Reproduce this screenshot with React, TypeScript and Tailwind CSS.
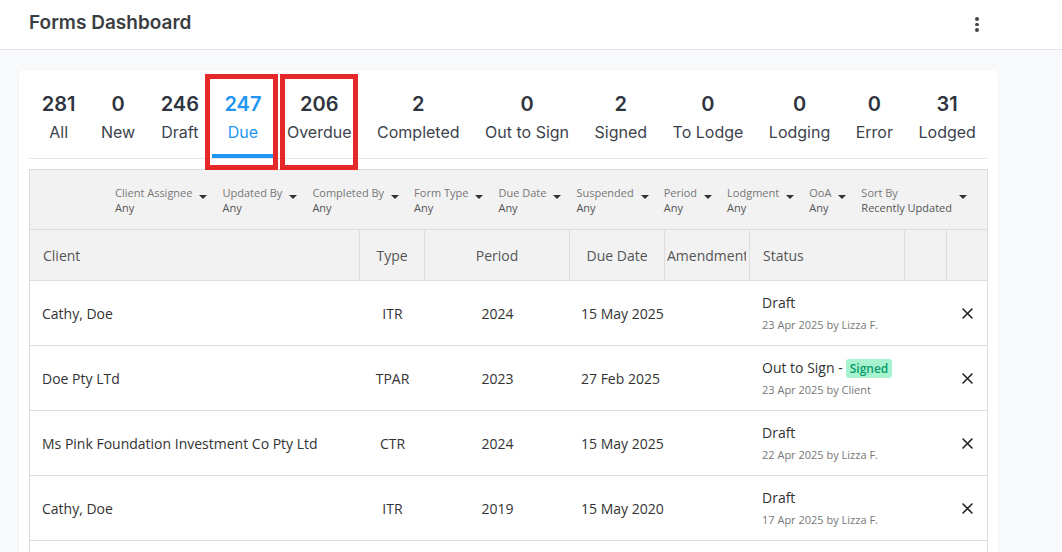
import React from "react";

type Tab = { count: number; label: string };

const tabs: Tab[] = [
  { count: 281, label: "All" },
  { count: 0, label: "New" },
  { count: 246, label: "Draft" },
  { count: 247, label: "Due" },
  { count: 206, label: "Overdue" },
  { count: 2, label: "Completed" },
  { count: 0, label: "Out to Sign" },
  { count: 2, label: "Signed" },
  { count: 0, label: "To Lodge" },
  { count: 0, label: "Lodging" },
  { count: 0, label: "Error" },
  { count: 31, label: "Lodged" },
];

const filters = [
  { label: "Client Assignee", value: "Any" },
  { label: "Updated By", value: "Any" },
  { label: "Completed By", value: "Any" },
  { label: "Form Type", value: "Any" },
  { label: "Due Date", value: "Any" },
  { label: "Suspended", value: "Any" },
  { label: "Period", value: "Any" },
  { label: "Lodgment", value: "Any" },
  { label: "OoA", value: "Any" },
  { label: "Sort By", value: "Recently Updated" },
];

type Row = {
  client: string;
  type: string;
  period: string;
  due: string;
  status: string;
  signed?: boolean;
  updated: string;
};

const rows: Row[] = [
  { client: "Cathy, Doe", type: "ITR", period: "2024", due: "15 May 2025", status: "Draft", updated: "23 Apr 2025 by Lizza F." },
  { client: "Doe Pty LTd", type: "TPAR", period: "2023", due: "27 Feb 2025", status: "Out to Sign -", signed: true, updated: "23 Apr 2025 by Client" },
  { client: "Ms Pink Foundation Investment Co Pty Ltd", type: "CTR", period: "2024", due: "15 May 2025", status: "Draft", updated: "22 Apr 2025 by Lizza F." },
  { client: "Cathy, Doe", type: "ITR", period: "2019", due: "15 May 2020", status: "Draft", updated: "17 Apr 2025 by Lizza F." },
];

const cols = "grid grid-cols-[330px_65px_145px_95px_85px_155px_42px_1fr]";

function Caret() {
  return (
    <span className="ml-[7px] mt-[10px] h-0 w-0 border-x-[4px] border-t-[4px] border-x-transparent border-t-[#333]" />
  );
}

function Kebab() {
  return (
    <button className="flex h-[40px] w-[40px] flex-col items-center justify-center gap-[2px]">
      <span className="h-[3.5px] w-[3.5px] rounded-full bg-[#444]" />
      <span className="h-[3.5px] w-[3.5px] rounded-full bg-[#444]" />
      <span className="h-[3.5px] w-[3.5px] rounded-full bg-[#444]" />
    </button>
  );
}

function CloseIcon() {
  return (
    <svg width="11" height="11" viewBox="0 0 11 11" fill="none">
      <path d="M1 1L10 10M10 1L1 10" stroke="#222" strokeWidth="1.6" strokeLinecap="round" />
    </svg>
  );
}

export default function App() {
  return (
    <div className="min-h-[552px] bg-[#f8f9fa] font-['Inter',sans-serif]">
      <header className="flex h-[50px] items-center justify-between border-b border-[#e2e4e8] bg-white pl-[29px] pr-[65px]">
        <h1 className="pb-[4px] text-[19px] font-semibold leading-[28px] text-[#3a3d42]">Forms Dashboard</h1>
        <Kebab />
      </header>

      <div className="relative ml-[19px] mt-[20px] w-[979px] rounded-[5px] bg-white px-[10px] pt-[10px] pb-0 shadow-[0_1px_3px_rgba(0,0,0,0.05)]">
        <div className="flex border-b border-[#e5e7eb]">
          {tabs.map((t) => {
            const active = t.label === "Due";
            return (
              <div
                key={t.label}
                className={
                  "flex flex-col items-center px-[12.75px] pt-[12px] pb-[10px] border-b-4 " +
                  (active ? "border-[#2196f3]" : "border-transparent")
                }
              >
                <span
                  className={
                    "text-[20px] font-semibold leading-[24px] " + (active ? "text-[#2196f3]" : "text-[#2f3540]")
                  }
                >
                  {t.count}
                </span>
                <span
                  className={
                    "mt-[4px] whitespace-nowrap text-[16px] leading-[24px] " +
                    (active ? "text-[#2196f3]" : "text-[#3d434d]")
                  }
                >
                  {t.label}
                </span>
              </div>
            );
          })}
        </div>

        <div className="mt-[10px] border-x border-t border-[#ddd] font-['Open_Sans',sans-serif]">
          <div className="flex h-[60px] justify-end gap-[15px] border-b border-[#ddd] bg-[#f2f2f2] pr-[20px] pt-[15px]">
            {filters.map((f) => (
              <div key={f.label} className="flex items-start">
                <div className="flex flex-col text-[11px] leading-[15px]">
                  <span className="text-[#777]">{f.label}</span>
                  <span className="text-[#555]">{f.value}</span>
                </div>
                <Caret />
              </div>
            ))}
          </div>

          <div className={cols + " h-[51px] border-b border-[#ddd] bg-[#f2f2f2] text-[14px] text-[#555]"}>
            <div className="flex items-center border-r border-[#ddd] pl-[13px]">Client</div>
            <div className="flex items-center justify-center border-r border-[#ddd]">Type</div>
            <div className="flex items-center justify-center border-r border-[#ddd]">Period</div>
            <div className="flex items-center justify-center border-r border-[#ddd]">Due Date</div>
            <div className="flex items-center border-r border-[#ddd] pl-[2px]">
              <div className="w-[79px] overflow-hidden whitespace-nowrap">Amendment</div>
            </div>
            <div className="flex items-center border-r border-[#ddd] pl-[13px]">Status</div>
            <div className="border-r border-[#ddd]" />
            <div />
          </div>

          {rows.map((r, i) => (
            <div key={i} className={cols + " h-[65px] border-b border-[#ddd] bg-white text-[14px] text-[#333]"}>
              <div className="flex items-center pl-[12px] whitespace-nowrap">{r.client}</div>
              <div className="flex items-center justify-center">{r.type}</div>
              <div className="flex items-center justify-center">{r.period}</div>
              <div className="flex items-center whitespace-nowrap pl-[11px]">{r.due}</div>
              <div />
              <div className="flex flex-col justify-center pl-[12px]">
                <div className="flex items-center leading-[20px] whitespace-nowrap">
                  {r.status}
                  {r.signed && (
                    <span className="ml-[3px] rounded-[3px] bg-[#a7f3d0] px-[4px] text-[12px] font-semibold leading-[19px] text-[#0a9b68]">
                      Signed
                    </span>
                  )}
                </div>
                <div className="mt-[4px] whitespace-nowrap text-[11px] leading-[16px] text-[#777]">{r.updated}</div>
              </div>
              <div />
              <div className="flex items-center justify-center">
                <CloseIcon />
              </div>
            </div>
          ))}
          <div className="h-[65px] bg-white" />
        </div>

        <div className="pointer-events-none absolute left-[186px] top-[4px] h-[96px] w-[73px] border-[5px] border-[#e5292b]" />
        <div className="pointer-events-none absolute left-[261px] top-[4px] h-[96px] w-[78px] border-[5px] border-[#e5292b]" />
      </div>
    </div>
  );
}
